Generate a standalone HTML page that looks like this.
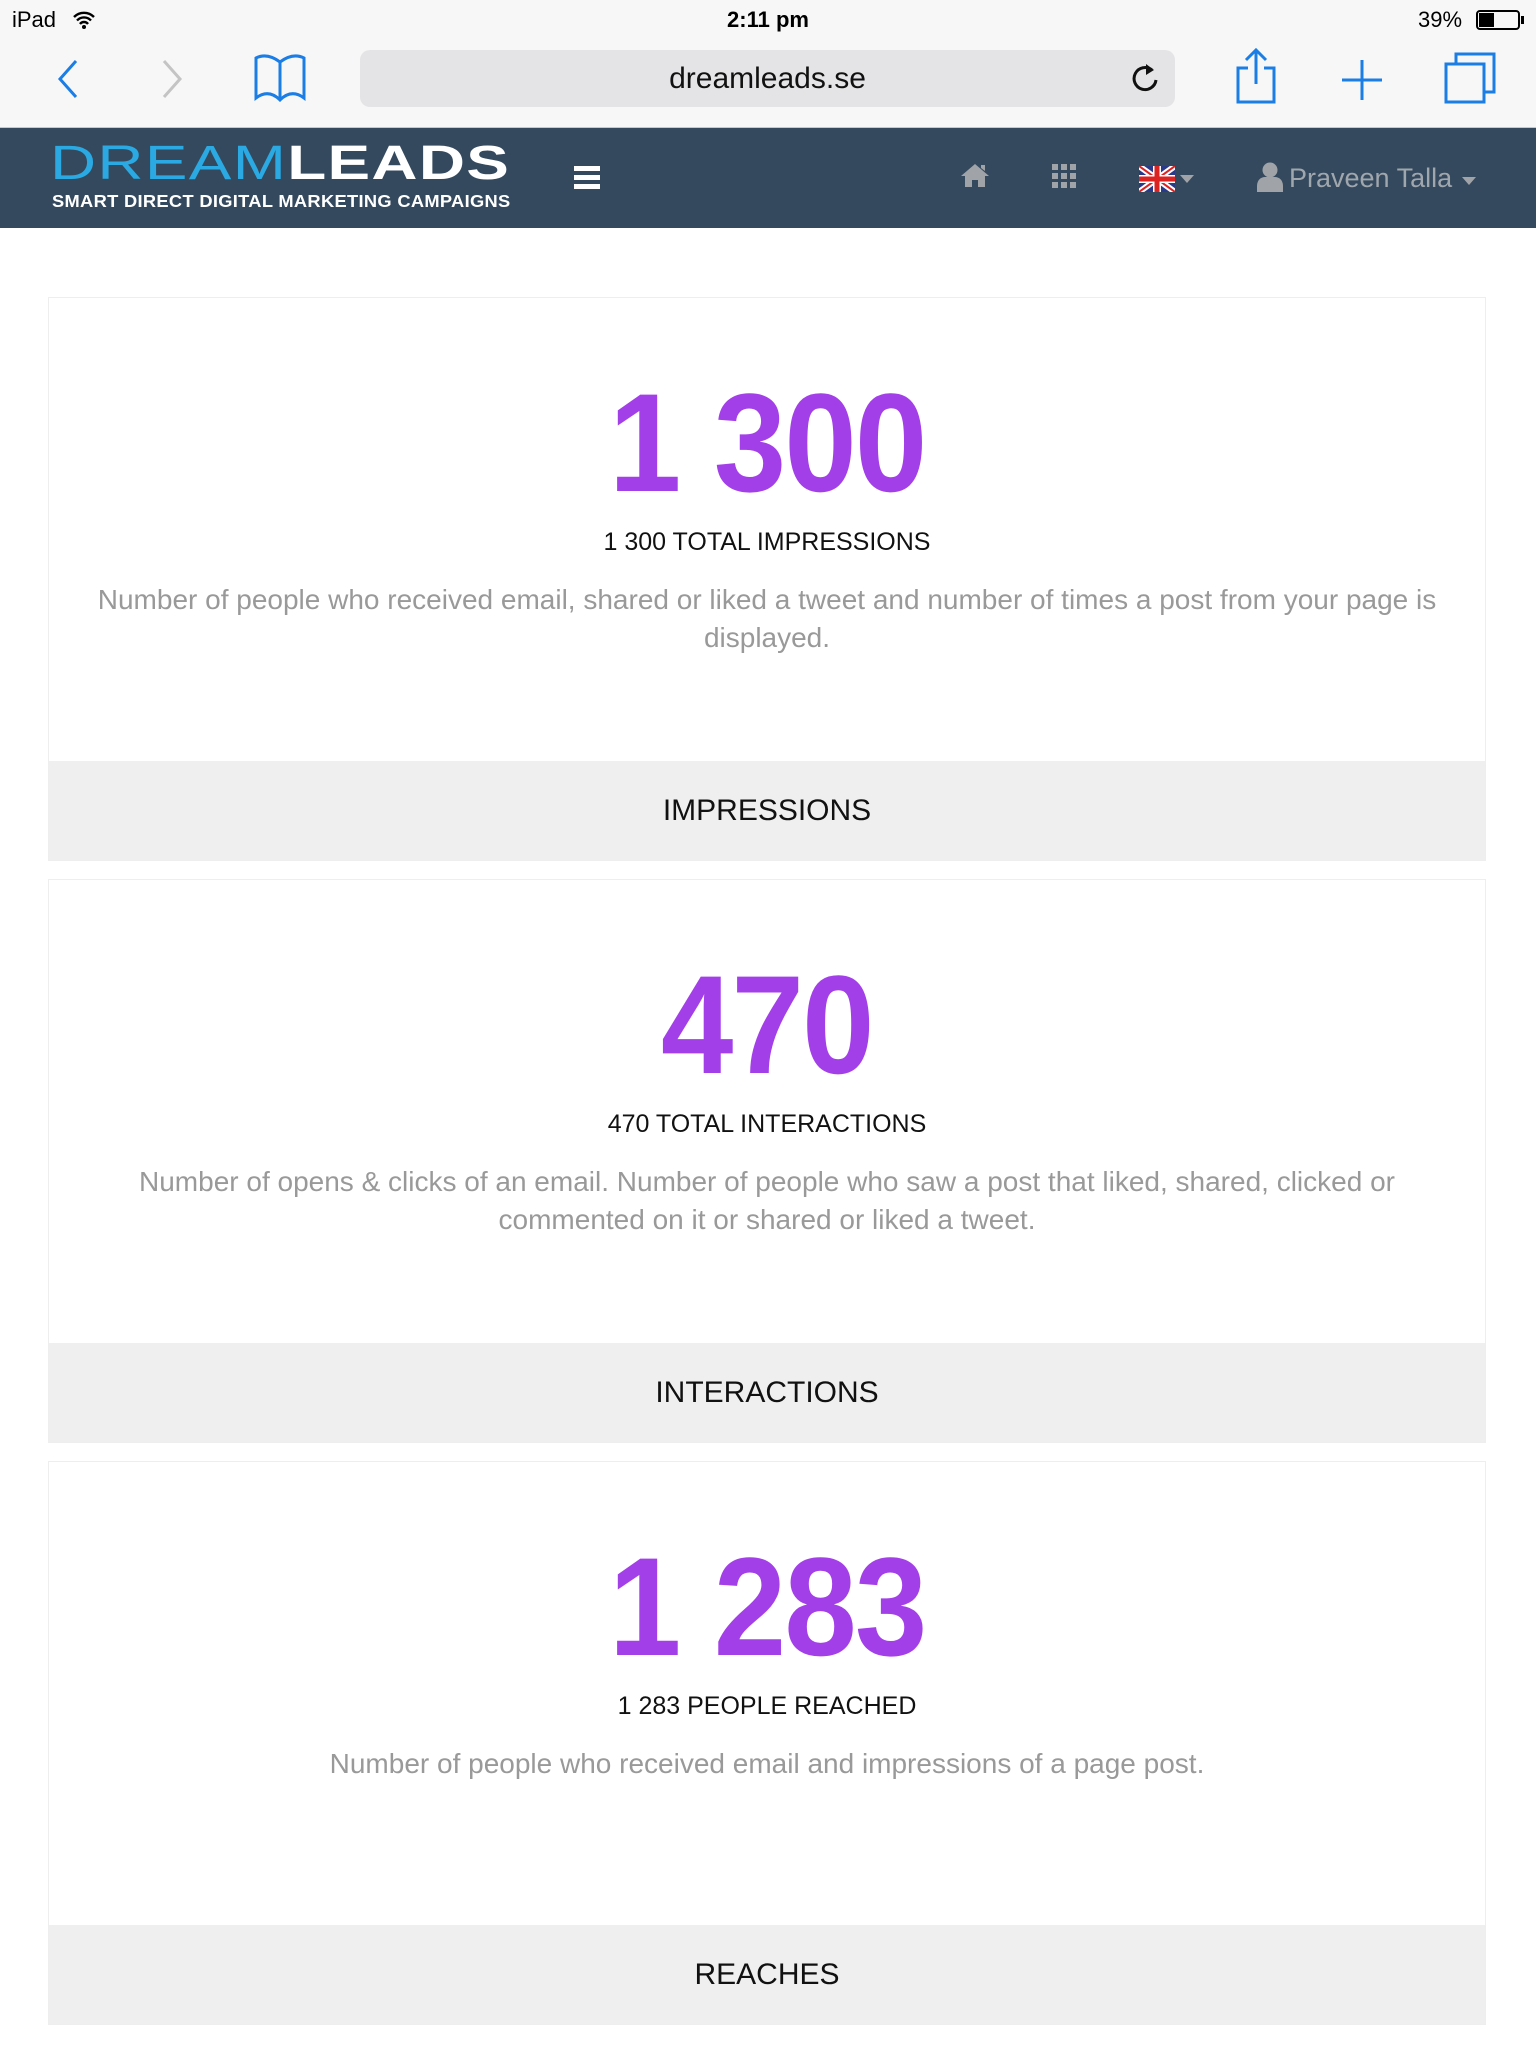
<!DOCTYPE html>
<html><head><meta charset="utf-8"><style>
*{margin:0;padding:0;box-sizing:border-box}
body{width:1536px;height:2048px;background:#fff;font-family:"Liberation Sans",sans-serif;position:relative;overflow:hidden}
.abs{position:absolute}
.status{top:0;left:0;width:1536px;height:40px;background:#f7f7f7;font-size:22px;color:#000}
.safari{top:40px;left:0;width:1536px;height:88px;background:#f7f7f7;border-bottom:1px solid #c8c8c8}
.url{left:360px;top:10px;width:815px;height:57px;background:#e4e4e6;border-radius:10px;text-align:center;font-size:30px;line-height:57px;color:#111}
.nav{top:128px;left:0;width:1536px;height:100px;background:#34495e}
.card{left:48px;width:1438px;border:1px solid #eee;background:#fff;text-align:center}
.big{color:#a33fe8;font-size:140px;font-weight:bold;letter-spacing:-2px;line-height:1;display:inline-block;transform:scaleX(0.93)}
.sub{font-size:25px;color:#111;}
.desc{font-size:28px;color:#999;line-height:38px;padding:0 30px}
.foot{position:absolute;left:0;right:0;bottom:0;height:99px;background:#efefef;font-size:30px;line-height:99px;color:#111}
.ic{fill:#a0a4a8}
</style></head><body>
<div class="abs status">
 <span class="abs" style="left:12px;top:7px">iPad</span>
 <svg class="abs" style="left:72px;top:10px" width="24" height="20" viewBox="0 0 24 20"><path d="M2 7a14 14 0 0 1 20 0M5 10.5a9.5 9.5 0 0 1 14 0M8 14a5 5 0 0 1 8 0" stroke="#000" stroke-width="2.4" fill="none"/><circle cx="12" cy="17" r="2" fill="#000"/></svg>
 <span class="abs" style="left:0;width:1536px;text-align:center;top:7px;font-weight:bold">2:11 pm</span>
 <span class="abs" style="left:1418px;top:7px">39%</span>
 <div class="abs" style="left:1476px;top:10px;width:44px;height:20px;border:2px solid #000;border-radius:4px"><div style="width:15px;height:14px;margin:1px;background:#000"></div></div>
 <div class="abs" style="left:1521px;top:16px;width:3px;height:8px;background:#000"></div>
</div>
<div class="abs safari">
 <svg class="abs" style="left:56px;top:17px" width="24" height="44"><path d="M20 4L4 22l16 18" stroke="#1a7ee6" stroke-width="3" fill="none"/></svg>
 <svg class="abs" style="left:160px;top:17px" width="24" height="44"><path d="M4 4l16 18L4 40" stroke="#c4c4c4" stroke-width="3" fill="none"/></svg>
 <svg class="abs" style="left:252px;top:14px" width="56" height="50"><path d="M4 4v40c8-6 16-6 24 2c8-8 16-8 24-2V4c-8-4-16-2-24 4c-8-6-16-8-24-4zM28 8v38" stroke="#1a7ee6" stroke-width="3" fill="none"/></svg>
 <div class="abs url">dreamleads.se</div>
 <svg class="abs" style="left:1130px;top:20px" width="30" height="36"><path d="M22 10a11 11 0 1 0 4 10" stroke="#111" stroke-width="3" fill="none"/><path d="M16 4l8 6-8 5z" fill="#111"/></svg>
 <svg class="abs" style="left:1234px;top:8px" width="44" height="56"><path d="M14 20H4v34h36V20H30M22 2v34M12 12l10-10 10 10" stroke="#1a7ee6" stroke-width="3" fill="none"/></svg>
 <svg class="abs" style="left:1340px;top:18px" width="44" height="44"><path d="M22 2v40M2 22h40" stroke="#1a7ee6" stroke-width="3" fill="none"/></svg>
 <svg class="abs" style="left:1444px;top:12px" width="56" height="52"><path d="M12 12V2h38v38H40M2 12h38v38H2z" stroke="#1a7ee6" stroke-width="3" fill="none"/></svg>
</div>
<div class="abs nav">
 <div class="abs" style="left:50px;top:8px;font-size:48px;font-weight:bold;letter-spacing:1px;transform:scaleX(1.33);transform-origin:left"><span style="color:#2aa9e2;font-weight:normal">DREAM</span><span style="color:#fff">LEADS</span></div>
 <div class="abs" style="left:52px;top:63px;font-size:17.5px;font-weight:bold;color:#fff;letter-spacing:0.3px;transform:scaleX(1.045);transform-origin:left">SMART DIRECT DIGITAL MARKETING CAMPAIGNS</div>
 <div class="abs" style="left:574px;top:38px;width:26px;height:5px;background:#fff;box-shadow:0 9px 0 #fff,0 18px 0 #fff"></div>
 <svg class="abs" style="left:960px;top:34px" width="30" height="26" viewBox="0 0 30 26"><path class="ic" d="M15 2L1 14h4v11h7v-7h6v7h7V14h4zM21 3h4v6l-4-3z"/></svg>
 <svg class="abs" style="left:1052px;top:36px" width="24" height="24"><g class="ic"><rect x="0" y="0" width="6" height="6"/><rect x="9" y="0" width="6" height="6"/><rect x="18" y="0" width="6" height="6"/><rect x="0" y="9" width="6" height="6"/><rect x="9" y="9" width="6" height="6"/><rect x="18" y="9" width="6" height="6"/><rect x="0" y="18" width="6" height="6"/><rect x="9" y="18" width="6" height="6"/><rect x="18" y="18" width="6" height="6"/></g></svg>
 <svg class="abs" style="left:1139px;top:38px" width="36" height="26" viewBox="0 0 36 26"><rect width="36" height="26" fill="#2a3a8a"/><path d="M0 0L36 26M36 0L0 26" stroke="#fff" stroke-width="6"/><path d="M0 0L36 26M36 0L0 26" stroke="#d22" stroke-width="2"/><path d="M18 0v26M0 13h36" stroke="#fff" stroke-width="8"/><path d="M18 0v26M0 13h36" stroke="#d22" stroke-width="5"/></svg>
 <svg class="abs" style="left:1180px;top:47px" width="14" height="8"><path class="ic" d="M0 0h14L7 8z"/></svg>
 <svg class="abs" style="left:1257px;top:34px" width="26" height="30"><circle class="ic" cx="13" cy="8" r="7.5"/><path class="ic" d="M0 30v-6c0-6 4-9 8-9h10c4 0 8 3 8 9v6z"/></svg>
 <div class="abs" style="left:1289px;top:35px;font-size:27px;color:#a0a6ad">Praveen Talla</div>
 <svg class="abs" style="left:1462px;top:49px" width="14" height="8"><path class="ic" d="M0 0h14L7 8z"/></svg>
</div>

<div class="abs card" style="top:297px;height:564px">
 <div class="big" style="margin-top:75px">1 300</div>
 <div class="sub" style="margin-top:15px">1 300 TOTAL IMPRESSIONS</div>
 <div class="desc" style="margin-top:24px">Number of people who received email, shared or liked a tweet and number of times a post from your page is displayed.</div>
 <div class="foot">IMPRESSIONS</div>
</div>
<div class="abs card" style="top:879px;height:564px">
 <div class="big" style="margin-top:75px">470</div>
 <div class="sub" style="margin-top:15px">470 TOTAL INTERACTIONS</div>
 <div class="desc" style="margin-top:24px;padding:0 80px">Number of opens &amp; clicks of an email. Number of people who saw a post that liked, shared, clicked or commented on it or shared or liked a tweet.</div>
 <div class="foot">INTERACTIONS</div>
</div>
<div class="abs card" style="top:1461px;height:564px">
 <div class="big" style="margin-top:75px">1 283</div>
 <div class="sub" style="margin-top:15px">1 283 PEOPLE REACHED</div>
 <div class="desc" style="margin-top:24px">Number of people who received email and impressions of a page post.</div>
 <div class="foot">REACHES</div>
</div>
</body></html>
